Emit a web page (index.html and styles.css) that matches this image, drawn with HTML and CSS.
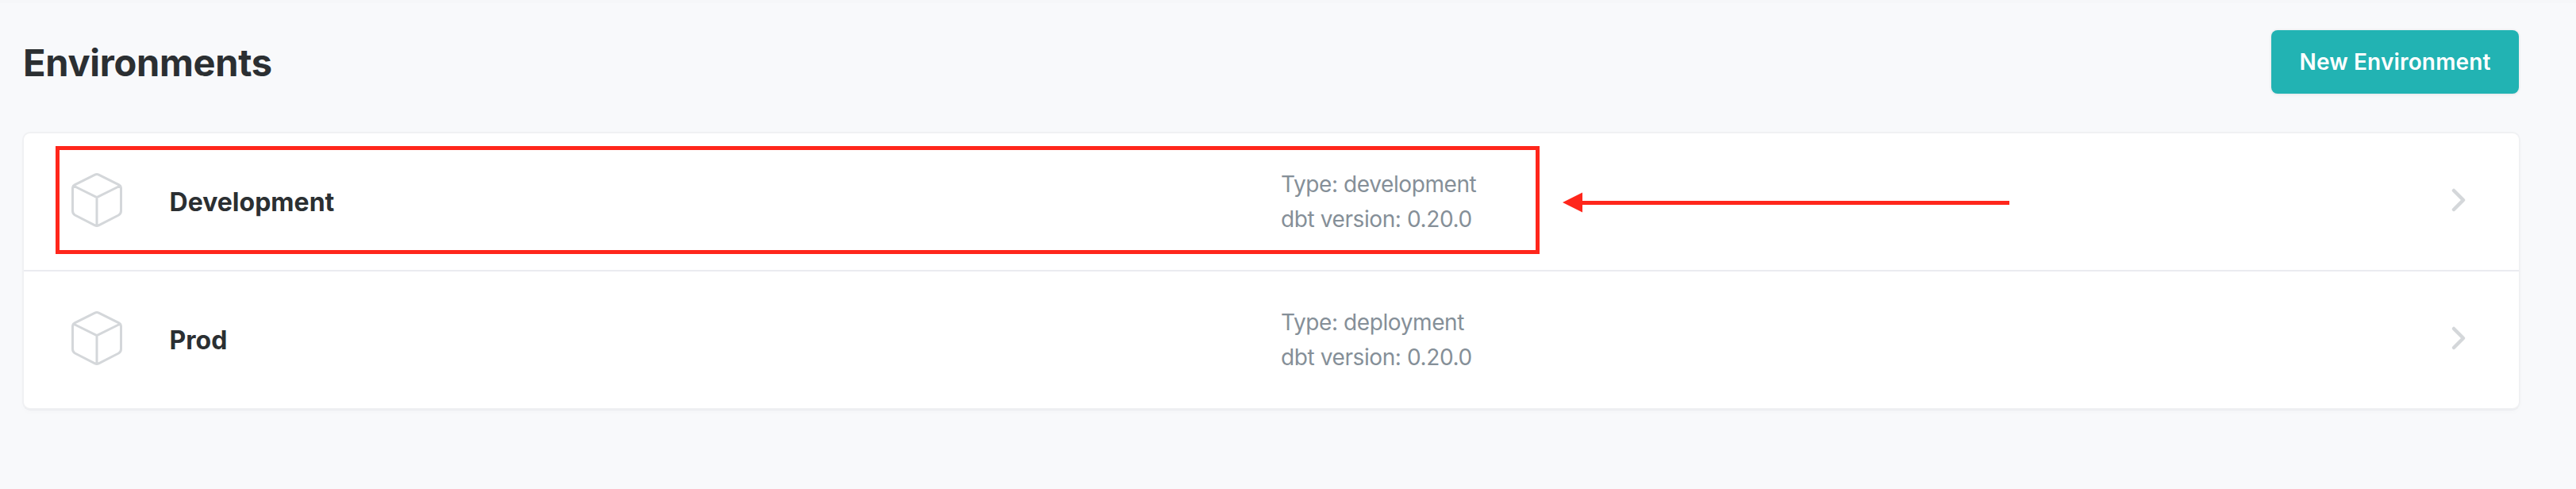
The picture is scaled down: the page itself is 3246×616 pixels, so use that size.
FILE: index.html
```html
<!DOCTYPE html>
<html lang="en">
<head>
<meta charset="utf-8">
<title>Environments</title>
<link rel="stylesheet" href="styles.css">
</head>
<body>
<svg class="defs" width="0" height="0" aria-hidden="true">
  <symbol id="cube" viewBox="0 0 66 72">
    <path d="M30.600 4.200Q33 3 35.400 4.200L60.500 16.600Q63.500 18.200 63.500 21.500V49.500Q63.500 53.300 60.500 55L35.400 67.800Q33 69 30.600 67.800L5.500 55Q2.500 53.300 2.500 49.500V21.500Q2.500 18.200 5.500 16.600ZM3.500 18L33 32.600L62.500 18M33 32.600V68"/>
  </symbol>
  <symbol id="chevron" viewBox="0 0 20 32">
    <path d="M4 4L16 16L4 28"/>
  </symbol>
</svg>
<main class="page">
  <header class="header">
    <h1 class="title">Environments</h1>
    <button class="new-button" type="button"><span>New Environment</span></button>
  </header>
  <section class="card">
    <div class="row">
      <svg class="cube"><use href="#cube"/></svg>
      <div class="name">Development</div>
      <div class="info"><div class="type">Type: development</div><div class="version">dbt version: 0.20.0</div></div>
      <svg class="chevron"><use href="#chevron"/></svg>
      <div class="highlight"></div>
      <svg class="arrow" viewBox="0 0 563 26"><path d="M0 13L25 .5V11H563V16H25V25.500Z"/></svg>
    </div>
    <div class="row">
      <svg class="cube"><use href="#cube"/></svg>
      <div class="name">Prod</div>
      <div class="info"><div class="type">Type: deployment</div><div class="version">dbt version: 0.20.0</div></div>
      <svg class="chevron"><use href="#chevron"/></svg>
    </div>
  </section>
</main>
</body>
</html>
```
FILE: styles.css
```css
* { box-sizing: border-box; }
body {
  margin: 0;
  background: #f8f9fb;
  font-family: Inter, "Liberation Sans", sans-serif;
  color: #2b2f32;
}
.defs { display: block; height: 0; }
.page {
  height: 616px;
  padding: 34px 72px 0 30px;
  border-top: 4px solid #f6f7f9;
}
.header {
  display: flex;
  justify-content: space-between;
  align-items: center;
  height: 80px;
  margin-bottom: 50px;
}
.title {
  margin: 2px 0 0 -1px;
  font-size: 47px;
  line-height: 60px;
  font-weight: 700;
  letter-spacing: -.3px;
}
.new-button {
  width: 312px;
  height: 80px;
  padding: 0;
  border: 0;
  border-radius: 8px;
  background: #22b3b3;
  box-shadow: 0 0 0 2px rgba(0, 0, 0, .025), 0 2px 4px rgba(0, 0, 0, .03);
  color: #fff;
  font: 600 28px/40px Inter, "Liberation Sans", sans-serif;
  letter-spacing: .15px;
}
.card {
  height: 346px;
  border-radius: 8px;
  background: #fff;
  box-shadow: 0 0 0 2px #f0f1f3, 0 2px 0 1px #eaebef, 0 4px 8px rgba(0, 0, 0, .025);
}
.row {
  position: relative;
  display: grid;
  grid-template-columns: 66px 1400px 1fr 20px;
  column-gap: 59px;
  align-items: center;
  height: 172px;
  padding: 0 66px 0 59px;
}
.row + .row {
  height: 174px;
  border-top: 2px solid #eaebf0;
}
.cube, .chevron {
  fill: none;
  stroke: #d4d7da;
  stroke-linecap: round;
  stroke-linejoin: round;
}
.cube {
  width: 66px;
  height: 72px;
  margin-top: -4px;
  stroke-width: 3;
}
.chevron {
  width: 20px;
  height: 32px;
  margin-top: -4px;
  stroke-width: 4.500;
}
.name {
  margin: 2px 0 0 -.5px;
  font-size: 32px;
  line-height: 40px;
  font-weight: 700;
  letter-spacing: .02px;
}
.info {
  margin-left: -59px;
  font-size: 28px;
  line-height: 44px;
  letter-spacing: -.4px;
  color: #858f98;
}
.highlight {
  position: absolute;
  left: 40px;
  top: 16px;
  width: 1870px;
  height: 136px;
  border: 5px solid #ff261b;
}
.arrow {
  position: absolute;
  left: 1939px;
  top: 74px;
  width: 563px;
  height: 26px;
  fill: #ff261b;
}
```
